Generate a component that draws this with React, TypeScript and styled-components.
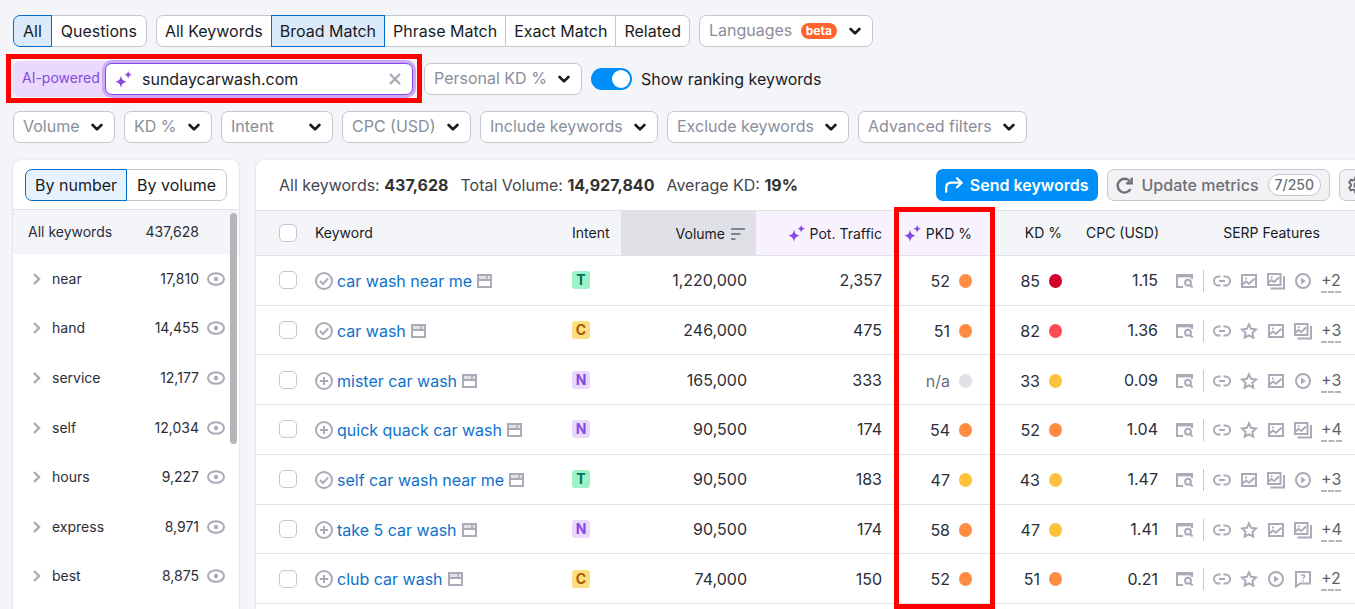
import React, { useState } from "react";
import styled, { createGlobalStyle, css } from "styled-components";

const color = {
  page: "#f4f5f9",
  text: "#191b23",
  soft: "#44464f",
  muted: "#8a8e9b",
  icon: "#a9abb6",
  border: "#c4c7cf",
  line: "#e0e1e9",
  link: "#0f71cb",
  blue: "#008ff8",
  purple: "#8649e1",
  mark: "#fe0000",
};

const GlobalStyle = createGlobalStyle`
  * { box-sizing: border-box; }
  body {
    margin: 0;
    background: ${color.page};
    color: ${color.text};
    font-family: Inter, "Liberation Sans", sans-serif;
    font-size: 16px;
    line-height: 24px;
  }
  button, input, select { font: inherit; color: inherit; }
`;

/* ---------- layout ---------- */

const Page = styled.div`
  display: flex;
  flex-direction: column;
  min-height: 100vh;
  padding: 15px 0 0 13px;
  overflow: hidden;
`;

const Filters = styled.form`
  display: flex;
  flex-direction: column;
  gap: 16px;
  margin-bottom: 17px;
`;

const FilterRow = styled.div`
  display: flex;
  align-items: center;
  gap: 9px;
  white-space: nowrap;
`;

const Columns = styled.div`
  display: flex;
  flex: 1;
  gap: 17px;
`;

const panel = css`
  background: #fff;
  box-shadow: 0 0 1px rgba(25, 27, 35, 0.25), 0 1px 2px rgba(25, 27, 35, 0.12);
`;

/* ---------- filter controls ---------- */

const Pills = styled.div`
  display: flex;
`;

const Pill = styled.button<{ $on?: boolean; $grow?: boolean; $tint?: string; $dense?: boolean }>`
  position: relative;
  z-index: ${(p) => (p.$on ? 1 : 0)};
  flex: ${(p) => (p.$grow ? 1 : "none")};
  height: 32px;
  padding: 0 ${(p) => (p.$dense ? 8 : 9)}px;
  margin: 0 0 0 -1px;
  border: 1px solid ${(p) => (p.$on ? "#006dca" : color.border)};
  background: ${(p) => (p.$on ? p.$tint ?? "#dbeafa" : "#fff")};
  line-height: 24px;
  white-space: nowrap;
  cursor: pointer;
  &:first-child { margin-left: 0; border-radius: 7px 0 0 7px; }
  &:last-child { border-radius: 0 7px 7px 0; }
`;

const DropShell = styled.span`
  position: relative;
  display: inline-flex;
`;

const Drop = styled.select<{ $room: number }>`
  appearance: none;
  height: 32px;
  padding: 0 ${(p) => p.$room}px 2px 9px;
  border: 1px solid ${color.border};
  border-radius: 7px;
  background: #fff;
  color: ${color.muted};
  cursor: pointer;
`;

const DropEnd = styled.span`
  position: absolute;
  top: 0;
  right: 12px;
  height: 32px;
  display: flex;
  align-items: center;
  gap: 12px;
  pointer-events: none;
`;

const Beta = styled.span`
  height: 16px;
  padding: 0 5px;
  border-radius: 8px;
  background: #ff642d;
  color: #fff;
  font-size: 12px;
  font-weight: 700;
  line-height: 15px;
`;

const AiField = styled.div`
  position: relative;
  display: flex;
  align-items: center;
  height: 32px;
  width: 402px;
`;

const AiLabel = styled.label`
  display: flex;
  align-items: center;
  width: 96px;
  height: 36px;
  padding: 0 0 2px 9px;
  border-radius: 7px 0 0 7px;
  background: #ead9fd;
  color: ${color.purple};
  font-size: 14px;
`;

const AiBox = styled.div`
  display: flex;
  align-items: center;
  width: 308px;
  height: 32px;
  padding: 0 11px 0 9px;
  margin-left: -4px;
  border: 1px solid ${color.purple};
  border-radius: 7px;
  background: #fff;
  box-shadow: 0 0 0 3px #cba9fa;
`;

const AiInput = styled.input`
  flex: 1;
  min-width: 0;
  padding: 0;
  margin-left: 10px;
  border: 0;
  outline: 0;
  background: transparent;
`;

const Plain = styled.button`
  display: inline-flex;
  padding: 0;
  border: 0;
  background: none;
  color: ${color.icon};
  cursor: pointer;
`;

/* Red outlines that call attention to the personal difficulty data. */
const FieldMark = styled.span`
  position: absolute;
  inset: -9px -7px -8px -7px;
  border: 5px solid ${color.mark};
  pointer-events: none;
`;

const ColumnMark = styled.span`
  position: absolute;
  top: -3px;
  right: 360px;
  bottom: 0;
  width: 101px;
  border: 5px solid ${color.mark};
  pointer-events: none;
`;

const SwitchLabel = styled.label`
  display: flex;
  align-items: center;
  gap: 9px;
  cursor: pointer;
`;

const Switch = styled.input`
  appearance: none;
  width: 41px;
  height: 22px;
  margin: 0;
  padding: 2px;
  border-radius: 11px;
  background: ${color.border};
  cursor: pointer;
  &::before {
    content: "";
    display: block;
    width: 18px;
    height: 18px;
    border-radius: 50%;
    background: #fff;
  }
  &:checked { background: ${color.blue}; }
  &:checked::before { margin-left: auto; }
`;

/* ---------- sidebar ---------- */

const Sidebar = styled.aside`
  ${panel}
  position: relative;
  display: flex;
  flex-direction: column;
  flex: none;
  width: 226px;
  border-radius: 7px 7px 0 0;
`;

const SideTop = styled.div`
  padding: 9px 12px 8px;
  border-bottom: 1px solid ${color.line};
`;

const SideAll = styled.div`
  display: flex;
  justify-content: space-between;
  height: 44px;
  padding: 0 40px 0 15px;
  align-items: center;
  background: ${color.page};
  color: #2b2e38;
  font-size: 14px;
`;

const SideList = styled.ul`
  display: flex;
  flex-direction: column;
  flex: 1;
  margin: 0;
  padding: 0 0 8px;
  list-style: none;
`;

const SideItem = styled.li`
  display: flex;
  flex: 1;
  align-items: center;
  padding: 0 14px 0 19px;
  color: #2b2e38;
  font-size: 14px;
  line-height: 20px;
`;

const SideName = styled.span`
  flex: 1;
  margin-left: 11px;
`;

const SideCount = styled.span`
  margin-right: 8px;
`;

const Thumb = styled.div`
  position: absolute;
  top: 53px;
  right: 2px;
  width: 7px;
  height: 231px;
  border-radius: 4px;
  background: #b5b5b9;
`;

/* ---------- main panel ---------- */

const Main = styled.main`
  ${panel}
  flex: 1;
  min-width: 0;
  border-radius: 7px 0 0 0;
`;

const Bar = styled.div`
  display: flex;
  align-items: center;
  height: 50px;
  padding-left: 23px;
  white-space: nowrap;
`;

const Stats = styled.p`
  display: flex;
  gap: 12px;
  margin: 0;
  color: ${color.soft};
  b { font-weight: 700; color: #333; }
`;

const Actions = styled.div`
  display: flex;
  flex: none;
  gap: 9px;
  margin-left: auto;
  margin-right: -20px;
`;

const Action = styled.button<{ $primary?: boolean }>`
  display: flex;
  align-items: center;
  gap: ${(p) => (p.$primary ? 7 : 9)}px;
  height: 32px;
  padding: 0 ${(p) => (p.$primary ? 9 : 8)}px;
  border: ${(p) => (p.$primary ? "0" : `1px solid ${color.border}`)};
  border-radius: 7px;
  background: ${(p) => (p.$primary ? color.blue : "#f2f2f4")};
  color: ${(p) => (p.$primary ? "#fff" : "#6c6e79")};
  font-weight: ${(p) => (p.$primary ? 600 : 500)};
  cursor: pointer;
`;

const Quota = styled.span`
  height: 22px;
  padding: 0 6px;
  border: 1px solid ${color.border};
  border-radius: 11px;
  background: #fff;
  font-size: 14px;
  line-height: 20px;
`;

const TableWrap = styled.div`
  position: relative;
  height: 399px;
`;

const Table = styled.table`
  width: 100%;
  height: 394px;
  border-collapse: separate;
  border-spacing: 0;
  table-layout: fixed;
  white-space: nowrap;
`;

type Align = "left" | "right" | "center";

const Th = styled.th<{ $align?: Align; $pad?: string; $bg?: string }>`
  height: 46px;
  padding: 0 ${(p) => p.$pad ?? "0"};
  border-top: 1px solid ${color.line};
  border-bottom: 1px solid ${color.line};
  background: ${(p) => p.$bg ?? color.page};
  font-size: 14px;
  font-weight: 400;
  line-height: 20px;
  text-align: ${(p) => p.$align ?? "left"};
`;

const Td = styled.td<{ $align?: Align; $pad?: string }>`
  height: 49px;
  padding: 0 ${(p) => p.$pad ?? "0"};
  border-bottom: 1px solid ${color.line};
  color: #2b2e38;
  text-align: ${(p) => p.$align ?? "left"};
`;

const Inline = styled.span<{ $gap?: number }>`
  display: inline-flex;
  align-items: center;
  vertical-align: middle;
  gap: ${(p) => p.$gap ?? 4}px;
`;

const Check = styled.input`
  appearance: none;
  display: block;
  width: 18px;
  height: 18px;
  margin: 0;
  border: 1px solid ${color.border};
  border-radius: 5px;
  background: #fff;
  &:checked { background: ${color.blue}; }
`;

const KeywordLink = styled.a`
  margin-right: 1px;
  color: ${color.link};
  text-decoration: none;
`;

const intents = {
  T: ["#9ef2c9", "#00725a"],
  C: ["#fbdf81", "#a75800"],
  N: ["#ebd8fd", "#8649e1"],
};
type Intent = keyof typeof intents;

const IntentTag = styled.span<{ $kind: Intent }>`
  display: block;
  width: 18px;
  height: 18px;
  border-radius: 3px;
  background: ${(p) => intents[p.$kind][0]};
  color: ${(p) => intents[p.$kind][1]};
  font-size: 14px;
  font-weight: 700;
  line-height: 18px;
  text-align: center;
`;

const levels = { none: "#e0e1e9", yellow: "#fdc23c", orange: "#ff8c43", red: "#ff4953", dark: "#d1002f" };
type Level = keyof typeof levels;

const Dot = styled.i<{ $level: Level }>`
  width: 13px;
  height: 14px;
  border-radius: 50%;
  background: ${(p) => levels[p.$level]};
`;

const Faint = styled.span`
  color: #6c6e79;
`;

const Divider = styled.i`
  width: 1px;
  height: 22px;
  background: ${color.border};
`;

const More = styled.button`
  padding: 0;
  border: 0;
  border-bottom: 2px dashed #b4b6bf;
  background: none;
  color: #5d5f69;
  line-height: 22px;
  cursor: pointer;
`;

/* ---------- icons ---------- */

const Icon = styled.svg.attrs<{ strokeWidth?: number | string }>((p) => ({
  "aria-hidden": true,
  fill: "none",
  stroke: "currentColor",
  strokeWidth: p.strokeWidth ?? 2,
}))`
  display: block;
  flex: none;
`;

const SparkleIcon = styled(Icon)`
  color: ${color.purple};
`;

const Chevron = () => (
  <Icon width="12" height="8" viewBox="0 0 12 8" strokeWidth={2.6} strokeLinecap="round" strokeLinejoin="round">
    <path d="M1.6 2 6 6.400l4.400-4.400" />
  </Icon>
);

const Sparkles = () => (
  <SparkleIcon width="17" height="17" viewBox="0 0 17 17">
    <path
      fill="currentColor"
      stroke="none"
      d="M6 4.800c.9 4 2 5.100 6 6-4 .9-5.100 2-6 6-.9-4-2-5.100-6-6 4-.9 5.100-2 6-6ZM13.200 0c.6 2.500 1.300 3.200 3.800 3.700-2.500.6-3.200 1.300-3.800 3.800-.6-2.500-1.300-3.200-3.800-3.800 2.500-.5 3.200-1.200 3.800-3.700Z"
    />
  </SparkleIcon>
);

const CloseIcon = () => (
  <Icon width="12" height="12" viewBox="0 0 12 12" strokeWidth={2.4}>
    <path d="m1 1 10 10M11 1 1 11" />
  </Icon>
);

const RightChevron = () => (
  <Icon width="9" height="12" viewBox="0 0 9 12" strokeWidth={2.4}>
    <path d="m2 1 5 5-5 5" />
  </Icon>
);

const Eye = () => (
  <Icon width="18" height="14" viewBox="0 0 18 14">
    <ellipse cx="9" cy="7" rx="8" ry="5.800" />
    <circle cx="9" cy="7" r="2.200" fill="currentColor" stroke="none" />
  </Icon>
);

const CheckCircle = () => (
  <Icon width="18" height="18" viewBox="0 0 18 18">
    <circle cx="9" cy="9" r="8" />
    <path d="m5 9 3 3 5.200-5.600" />
  </Icon>
);

const PlusCircle = () => (
  <Icon width="18" height="18" viewBox="0 0 18 18">
    <circle cx="9" cy="9" r="8" />
    <path d="M9 5v8M5 9h8" />
  </Icon>
);

const SnapshotIcon = () => (
  <Icon width="15" height="14" viewBox="0 0 15 14">
    <path d="M1 1h13v12H1z" />
    <path d="M1 6h13" strokeWidth={2} />
    <path d="M10 1v4" strokeWidth={1.500} />
    <path d="M2 3.500h11" strokeWidth={3} opacity={0.35} />
  </Icon>
);

const SortIcon = () => (
  <Icon width="14" height="12" viewBox="0 0 14 12">
    <path d="M0 1h14M0 6h9.500M0 11h4.500" stroke="#7a8794" />
  </Icon>
);

const ShareArrow = () => (
  <Icon width="18" height="16" viewBox="0 0 18 16" strokeWidth={2.2} strokeLinecap="round" strokeLinejoin="round">
    <path d="M1.200 14.800V11c0-3.500 1.800-5.300 5.300-5.300h10M12 1.200l4.700 4.500L12 10.300" />
  </Icon>
);

const Refresh = () => (
  <Icon width="17" height="17" viewBox="0 0 17 17" strokeWidth={2.4}>
    <path d="M14.500 12.200A6.900 6.900 0 1 1 14 4.400" />
    <path d="M15.700.8v5.500h-5.500" />
  </Icon>
);

const Gear = () => (
  <Icon width="18" height="18" viewBox="0 0 18 18">
    <path
      strokeLinejoin="round"
      d="M7.300 1.200h3.400l.5 2.300 1.700 1 2.200-.8 1.700 3-1.700 1.500v1.700l1.700 1.500-1.700 3-2.200-.8-1.700 1-.5 2.200H7.300l-.5-2.200-1.700-1-2.200.8-1.700-3 1.700-1.500V8.200L1.200 6.700l1.700-3 2.200.8 1.700-1z"
    />
    <circle cx="9" cy="9" r="2.500" />
  </Icon>
);

const SerpSearch = () => (
  <Icon width="18" height="14" viewBox="0 0 18 14">
    <path d="M0 1.700h17" strokeWidth={3.4} />
    <path d="M1 2v11h6M16 2v3" />
    <circle cx="12" cy="8.700" r="2.900" />
    <path d="m14 10.800 2.600 2.600" />
  </Icon>
);

const LinkIcon = () => (
  <Icon width="18" height="18" viewBox="0 0 18 18">
    <path d="M7.500 4.500h-2a4.500 4.500 0 0 0 0 9h2M10.500 4.500h2a4.500 4.500 0 0 1 0 9h-2M6 9h6" />
  </Icon>
);

const StarIcon = () => (
  <Icon width="18" height="18" viewBox="0 0 18 18">
    <path d="m9 2.300 2.100 4.500 4.900.6-3.600 3.400.9 4.900L9 13.300l-4.300 2.400.9-4.900L2 7.400l4.900-.6z" />
  </Icon>
);

const ImageIcon = () => (
  <Icon width="18" height="18" viewBox="0 0 18 18">
    <path d="M2 3h14v12H2z" />
    <path d="m2.500 12.500 3.500-3 3 2.300 5.500-5" />
    <circle cx="6" cy="6.500" r="1.100" fill="currentColor" stroke="none" />
  </Icon>
);

const ImagesIcon = () => (
  <Icon width="18" height="18" viewBox="0 0 18 18">
    <path d="M1 2h12.500v11H1z" />
    <path d="m1.500 10.500 3-2.500 2.700 2L12 5.500" />
    <circle cx="4.700" cy="5.200" r="1" fill="currentColor" stroke="none" />
    <path d="M17 4v12.500H3.500" />
  </Icon>
);

const PlayIcon = () => (
  <Icon width="18" height="18" viewBox="0 0 18 18">
    <circle cx="9" cy="9" r="7" />
    <path d="M7 5.800v6.400L12 9z" fill="currentColor" stroke="none" />
  </Icon>
);

const FaqIcon = () => (
  <Icon width="18" height="18" viewBox="0 0 18 18">
    <path d="M2 2h14v11.500H6L2 16.500z" />
    <path d="M7.300 6.200c0-2 3.400-2 3.400 0 0 1.300-1.700 1.200-1.700 2.700M9 10v1.400" strokeWidth={1.4} />
  </Icon>
);

const features = {
  link: ["Sitelinks", LinkIcon],
  star: ["Reviews", StarIcon],
  image: ["Image", ImageIcon],
  images: ["Image pack", ImagesIcon],
  play: ["Video", PlayIcon],
  faq: ["People also ask", FaqIcon],
} as const;
type Feature = keyof typeof features;

/* ---------- data ---------- */

const groups: [string, string][] = [
  ["near", "17,810"],
  ["hand", "14,455"],
  ["service", "12,177"],
  ["self", "12,034"],
  ["hours", "9,227"],
  ["express", "8,971"],
  ["best", "8,875"],
];

type Row = {
  keyword: string;
  added: boolean;
  intent: Intent;
  volume: string;
  traffic: string;
  pkd: [string, Level];
  kd: [string, Level];
  cpc: string;
  serp: Feature[];
  more: string;
};

const rows: Row[] = [
  { keyword: "car wash near me", added: true, intent: "T", volume: "1,220,000", traffic: "2,357", pkd: ["52", "orange"], kd: ["85", "dark"], cpc: "1.15", serp: ["link", "image", "images", "play"], more: "+2" },
  { keyword: "car wash", added: true, intent: "C", volume: "246,000", traffic: "475", pkd: ["51", "orange"], kd: ["82", "red"], cpc: "1.36", serp: ["link", "star", "image", "images"], more: "+3" },
  { keyword: "mister car wash", added: false, intent: "N", volume: "165,000", traffic: "333", pkd: ["n/a", "none"], kd: ["33", "yellow"], cpc: "0.09", serp: ["link", "star", "image", "play"], more: "+3" },
  { keyword: "quick quack car wash", added: false, intent: "N", volume: "90,500", traffic: "174", pkd: ["54", "orange"], kd: ["52", "orange"], cpc: "1.04", serp: ["link", "star", "image", "images"], more: "+4" },
  { keyword: "self car wash near me", added: true, intent: "T", volume: "90,500", traffic: "183", pkd: ["47", "yellow"], kd: ["43", "yellow"], cpc: "1.47", serp: ["link", "image", "images", "play"], more: "+3" },
  { keyword: "take 5 car wash", added: false, intent: "N", volume: "90,500", traffic: "174", pkd: ["58", "orange"], kd: ["47", "yellow"], cpc: "1.41", serp: ["link", "star", "image", "images"], more: "+4" },
  { keyword: "club car wash", added: false, intent: "C", volume: "74,000", traffic: "150", pkd: ["52", "orange"], kd: ["51", "orange"], cpc: "0.21", serp: ["link", "star", "play", "faq"], more: "+2" },
];

/* ---------- parts ---------- */

type PillGroupProps = {
  label: string;
  items: string[];
  initial: string;
  grow?: boolean;
  dense?: boolean;
  tint?: string;
};

function PillGroup({ label, items, initial, grow, dense, tint }: PillGroupProps) {
  const [value, setValue] = useState(initial);
  return (
    <Pills role="group" aria-label={label}>
      {items.map((item) => (
        <Pill
          key={item}
          type="button"
          $on={item === value}
          $grow={grow}
          $dense={dense}
          $tint={tint}
          aria-pressed={item === value}
          onClick={() => setValue(item)}
        >
          {item}
        </Pill>
      ))}
    </Pills>
  );
}

function Dropdown({ label, room = 34, badge }: { label: string; room?: number; badge?: string }) {
  return (
    <DropShell>
      <Drop $room={room} aria-label={label}>
        <option>{label}</option>
      </Drop>
      <DropEnd>
        {badge && <Beta>{badge}</Beta>}
        <Chevron />
      </DropEnd>
    </DropShell>
  );
}

function KeywordRow({ row }: { row: Row }) {
  return (
    <tr>
      <Td $pad="23px">
        <Check type="checkbox" aria-label={`Select ${row.keyword}`} />
      </Td>
      <Td>
        <Inline>
          <Plain type="button" aria-label={row.added ? "In list" : "Add to list"}>
            {row.added ? <CheckCircle /> : <PlusCircle />}
          </Plain>
          <KeywordLink href="#">{row.keyword}</KeywordLink>
          <Plain type="button" aria-label="Open results page">
            <SnapshotIcon />
          </Plain>
        </Inline>
      </Td>
      <Td $pad="10px">
        <IntentTag $kind={row.intent}>{row.intent}</IntentTag>
      </Td>
      <Td $align="right" $pad="9px">{row.volume}</Td>
      <Td $align="right" $pad="10px">{row.traffic}</Td>
      <Td $align="right" $pad="20px 0 0">
        <Inline $gap={9}>
          {row.pkd[1] === "none" ? <Faint>{row.pkd[0]}</Faint> : row.pkd[0]}
          <Dot $level={row.pkd[1]} />
        </Inline>
      </Td>
      <Td $align="right" $pad="14px">
        <Inline $gap={9}>
          {row.kd[0]}
          <Dot $level={row.kd[1]} />
        </Inline>
      </Td>
      <Td $align="right" $pad="10px">{row.cpc}</Td>
      <Td $pad="8px">
        <Inline $gap={9}>
          <Plain type="button" aria-label="View results">
            <SerpSearch />
          </Plain>
          <Divider />
          {row.serp.map((name) => {
            const [label, Glyph] = features[name];
            return (
              <Plain key={name} type="button" aria-label={label}>
                <Glyph />
              </Plain>
            );
          })}
          <More type="button">{row.more}</More>
        </Inline>
      </Td>
    </tr>
  );
}

export default function App() {
  const [domain, setDomain] = useState("sundaycarwash.com");
  return (
    <>
      <GlobalStyle />
      <Page>
        <Filters onSubmit={(e) => e.preventDefault()}>
          <FilterRow>
            <PillGroup label="Keyword type" items={["All", "Questions"]} initial="All" />
            <PillGroup
              label="Match type"
              items={["All Keywords", "Broad Match", "Phrase Match", "Exact Match", "Related"]}
              initial="Broad Match"
              dense
            />
            <Dropdown label="Languages" room={79} badge="beta" />
          </FilterRow>
          <FilterRow>
            <AiField>
              <AiLabel htmlFor="domain">AI-powered</AiLabel>
              <AiBox>
                <Sparkles />
                <AiInput id="domain" value={domain} onChange={(e) => setDomain(e.target.value)} />
                <Plain type="button" aria-label="Clear domain" onClick={() => setDomain("")}>
                  <CloseIcon />
                </Plain>
              </AiBox>
              <FieldMark />
            </AiField>
            <Dropdown label="Personal KD %" />
            <SwitchLabel>
              <Switch type="checkbox" role="switch" defaultChecked />
              Show ranking keywords
            </SwitchLabel>
          </FilterRow>
          <FilterRow>
            <Dropdown label="Volume" />
            <Dropdown label="KD %" />
            <Dropdown label="Intent" room={58} />
            <Dropdown label="CPC (USD)" />
            <Dropdown label="Include keywords" />
            <Dropdown label="Exclude keywords" />
            <Dropdown label="Advanced filters" />
          </FilterRow>
        </Filters>

        <Columns>
          <Sidebar>
            <SideTop>
              <PillGroup label="Sort groups" items={["By number", "By volume"]} initial="By number" grow tint="#e6f3ff" />
            </SideTop>
            <SideAll>
              <span>All keywords</span>
              <span>437,628</span>
            </SideAll>
            <SideList>
              {groups.map(([name, count]) => (
                <SideItem key={name}>
                  <Plain type="button" aria-label={`Expand ${name}`}>
                    <RightChevron />
                  </Plain>
                  <SideName>{name}</SideName>
                  <SideCount>{count}</SideCount>
                  <Plain type="button" aria-label={`Exclude ${name}`}>
                    <Eye />
                  </Plain>
                </SideItem>
              ))}
            </SideList>
            <Thumb />
          </Sidebar>

          <Main>
            <Bar>
              <Stats>
                <span>All keywords: <b>437,628</b></span>
                <span>Total Volume: <b>14,927,840</b></span>
                <span>Average KD: <b>19%</b></span>
              </Stats>
              <Actions>
                <Action type="button" $primary>
                  <ShareArrow />
                  Send keywords
                </Action>
                <Action type="button">
                  <Refresh />
                  Update metrics
                  <Quota>7/250</Quota>
                </Action>
                <Action type="button" aria-label="Settings">
                  <Gear />
                </Action>
              </Actions>
            </Bar>
            <TableWrap>
              <Table>
                <colgroup>
                  <col width="59" />
                  <col />
                  <col width="59" />
                  <col width="135" />
                  <col width="136" />
                  <col width="100" />
                  <col width="84" />
                  <col width="92" />
                  <col width="187" />
                </colgroup>
                <thead>
                  <tr>
                    <Th $pad="23px">
                      <Check type="checkbox" aria-label="Select all keywords" />
                    </Th>
                    <Th>Keyword</Th>
                    <Th $pad="10px">Intent</Th>
                    <Th $align="right" $pad="11px" $bg="#e0e1e6">
                      <Inline $gap={6}>Volume <SortIcon /></Inline>
                    </Th>
                    <Th $align="right" $pad="10px" $bg="#f8f2ff">
                      <Inline $gap={5}><Sparkles /> Pot. Traffic</Inline>
                    </Th>
                    <Th $align="right" $pad="20px 0 0" $bg="#f8f2ff">
                      <Inline $gap={5}><Sparkles /> PKD %</Inline>
                    </Th>
                    <Th $align="right" $pad="14px">KD %</Th>
                    <Th $align="right" $pad="10px">CPC (USD)</Th>
                    <Th $align="center" $pad="0 0 20px">SERP Features</Th>
                  </tr>
                </thead>
                <tbody>
                  {rows.map((row) => (
                    <KeywordRow key={row.keyword} row={row} />
                  ))}
                </tbody>
              </Table>
              <ColumnMark />
            </TableWrap>
          </Main>
        </Columns>
      </Page>
    </>
  );
}
